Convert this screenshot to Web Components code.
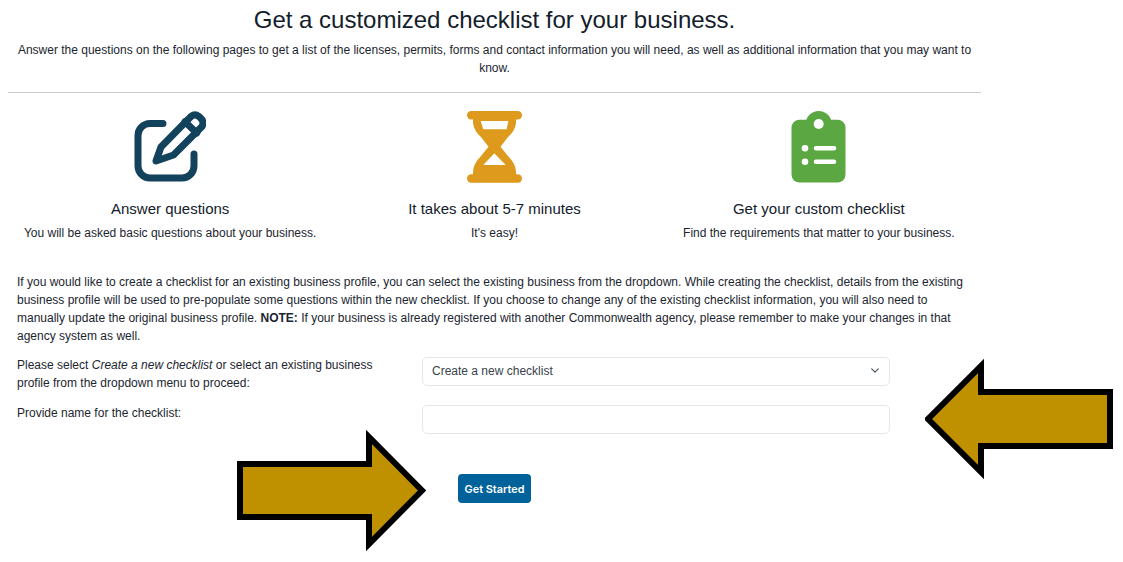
<!DOCTYPE html>
<html lang="en">
<head>
<meta charset="utf-8">
<title>Get a customized checklist</title>
<style>
    html, body { margin: 0; background: #fff; color: #1b2530; font-family: "Liberation Sans", Arial, sans-serif; }
</style>
</head>
<body>
<checklist-page>
    <checklist-intro slot="intro">
        <span slot="title">Get a customized checklist for your business.</span>
        Answer the questions on the following pages to get a list of the licenses, permits, forms and contact information you will need, as well as additional information that you may want to know.
    </checklist-intro>
    <step-card slot="steps" heading="Answer questions" text="You will be asked basic questions about your business.">
        <svg width="72" height="73" viewBox="134 110 72 73" fill="none" stroke="#12425c" stroke-width="7" stroke-linecap="round" stroke-linejoin="round">
            <path d="M163 123.500H150a12 12 0 0 0-12 12V166a12 12 0 0 0 12 12H182a12 12 0 0 0 12-12V154"/>
            <path d="M156 161L161 147L187 120.500L191.500 116Q195 113.500 199 116.500L201 118.500Q204.500 122 202 126.500L173.500 155Z"/>
            <path d="M185 121.700L196.700 133"/>
        </svg>
    </step-card>
    <step-card slot="steps" heading="It takes about 5-7 minutes" text="It's easy!">
        <svg width="55" height="73" viewBox="467 110 55 73">
            <rect x="467" y="111" width="55" height="8.500" rx="4.200" fill="#de9a1c"/>
            <rect x="467" y="174.300" width="55" height="8.500" rx="4.200" fill="#de9a1c"/>
            <path fill="#de9a1c" fill-rule="evenodd" d="M473 118V123Q474 131 481 137L488.500 146.700L481 156Q473 164 473 172V176H516V172Q516 164 508 156L500.500 146.700L508 137Q515 131 516 123V118ZM480.700 121L508.300 121L506.700 129.300L483.300 129.300ZM494.300 153.300L483.300 165L505.700 165Z"/>
        </svg>
    </step-card>
    <step-card slot="steps" heading="Get your custom checklist" text="Find the requirements that matter to your business.">
        <svg width="55" height="73" viewBox="791 111 55 73">
            <circle cx="818.700" cy="125" r="13" fill="#5ba843"/>
            <rect x="791.500" y="120.700" width="54" height="62.800" rx="8" fill="#5ba843"/>
            <circle cx="818.700" cy="125" r="5" fill="#fff"/>
            <circle cx="805" cy="149.300" r="3.300" fill="#fff"/>
            <circle cx="805" cy="162.700" r="3.300" fill="#fff"/>
            <path d="M816 149.300H834M816 162.700H834" stroke="#fff" stroke-width="4.500" stroke-linecap="round"/>
        </svg>
    </step-card>
    <p slot="note">If you would like to create a checklist for an existing business profile, you can select the existing business from the dropdown. While creating the checklist, details from the existing business profile will be used to pre-populate some questions within the new checklist. If you choose to change any of the existing checklist information, you will also need to manually update the original business profile. <b>NOTE:</b> If your business is already registered with another Commonwealth agency, please remember to make your changes in that agency system as well.</p>
    <form-row slot="form">
        <span slot="label">Please select <i>Create a new checklist</i> or select an existing business profile from the dropdown menu to proceed:</span>
        <fake-select value="Create a new checklist"></fake-select>
    </form-row>
    <form-row slot="form">
        <span slot="label">Provide name for the checklist:</span>
        <fake-select empty></fake-select>
    </form-row>
    <start-button slot="action">Get Started</start-button>
</checklist-page>
<arrow-mark box="925 358 188 122" points="1110,392 981,392 981,366 928,419 981,472 981,446 1110,446"></arrow-mark>
<arrow-mark box="237 429 189 123" points="240,464 369,464 369,437 422,490.500 369,544 369,517 240,517"></arrow-mark>

<script>
    // Contenedor general: hace de columna y reparte cada bloque en su sitio.
    class ChecklistPage extends HTMLElement {
        constructor() {
            super();
            this.attachShadow({ mode: 'open' });
        }

        connectedCallback() {
            this.shadowRoot.innerHTML = `
                <style>
                    :host { display: block; width: 973px; margin-left: 8px; font-size: 12px; line-height: 18px; }
                    .steps { display: grid; grid-template-columns: repeat(3, 1fr); margin-top: 17px; }
                    .note { padding: 0 9px; margin-top: 31px; }
                    ::slotted(p) { margin: 0; }
                    .form { display: flex; flex-direction: column; gap: 13px; padding: 0 9px; margin-top: 12px; }
                    .action { padding-left: 450px; margin-top: 40px; }
                </style>
                <slot name="intro"></slot>
                <div class="steps"><slot name="steps"></slot></div>
                <div class="note"><slot name="note"></slot></div>
                <div class="form"><slot name="form"></slot></div>
                <div class="action"><slot name="action"></slot></div>
            `;
        }
    }

    // Título, texto de entrada y la línea de separación.
    class ChecklistIntro extends HTMLElement {
        constructor() {
            super();
            this.attachShadow({ mode: 'open' });
        }

        connectedCallback() {
            this.shadowRoot.innerHTML = `
                <style>
                    :host { display: block; text-align: center; border-bottom: 1px solid #c9cccf; padding: 5px 0 15px; }
                    h1 { margin: 0 0 7px; font-size: 24px; line-height: 29px; font-weight: 400; color: #13202b; }
                    div { padding: 0 9px; }
                </style>
                <h1><slot name="title"></slot></h1>
                <div><slot></slot></div>
            `;
        }
    }

    // Tarjeta de cada paso: icono arriba, y título y descripción debajo.
    class StepCard extends HTMLElement {
        constructor() {
            super();
            this.attachShadow({ mode: 'open' });
        }

        connectedCallback() {
            this.shadowRoot.innerHTML = `
                <style>
                    :host { display: flex; flex-direction: column; align-items: center; text-align: center; }
                    .icon { height: 73px; display: flex; }
                    h2 { margin: 16px 0 5px; font-size: 15px; line-height: 20px; font-weight: 400; color: #13202b; }
                </style>
                <div class="icon"><slot></slot></div>
                <h2>${this.getAttribute('heading')}</h2>
                <div>${this.getAttribute('text')}</div>
            `;
        }
    }

    // Fila del formulario: etiqueta a la izquierda y control a la derecha.
    class FormRow extends HTMLElement {
        constructor() {
            super();
            this.attachShadow({ mode: 'open' });
        }

        connectedCallback() {
            this.shadowRoot.innerHTML = `
                <style>
                    :host { display: grid; grid-template-columns: 405px 468px; }
                    .label { max-width: 370px; margin-top: -1px; }
                </style>
                <div class="label"><slot name="label"></slot></div>
                <div><slot></slot></div>
            `;
        }
    }

    // Caja con el aspecto del desplegable; sin valor sirve también para el campo de texto.
    class FakeSelect extends HTMLElement {
        constructor() {
            super();
            this.attachShadow({ mode: 'open' });
        }

        connectedCallback() {
            const chevron = this.hasAttribute('empty') ? '' : `
                <svg width="8" height="5" viewBox="0 0 8 5" fill="none" stroke="#4a5560" stroke-width="1.200" stroke-linecap="round" stroke-linejoin="round"><path d="M.7 .8L4 4.100L7.300 .8"/></svg>
            `;
            this.shadowRoot.innerHTML = `
                <style>
                    :host { display: flex; align-items: center; justify-content: space-between; box-sizing: border-box; height: 29px; padding: 0 10px 2px 9px; border: 1px solid #e6e8ea; border-radius: 5px; color: #38424c; }
                </style>
                <span>${this.getAttribute('value') || ''}</span>
                ${chevron}
            `;
        }
    }

    class StartButton extends HTMLElement {
        constructor() {
            super();
            this.attachShadow({ mode: 'open' });
        }

        connectedCallback() {
            this.shadowRoot.innerHTML = `
                <style>
                    :host { display: inline-flex; align-items: center; justify-content: center; width: 73px; height: 29px; border-radius: 4px; background: #00629b; color: #fff; font: 600 10.900px Inter, "Liberation Sans", sans-serif; }
                </style>
                <slot></slot>
            `;
        }
    }

    // Flecha dorada pintada encima de la captura; su lugar libre sobre la página es el contenido.
    class ArrowMark extends HTMLElement {
        constructor() {
            super();
            this.attachShadow({ mode: 'open' });
        }

        connectedCallback() {
            const [x, y, w, h] = this.getAttribute('box').split(' ');
            this.shadowRoot.innerHTML = `
                <style>
                    :host { position: absolute; left: ${x}px; top: ${y}px; width: ${w}px; height: ${h}px; }
                    svg { display: block; }
                </style>
                <svg width="${w}" height="${h}" viewBox="${x} ${y} ${w} ${h}">
                    <polygon points="${this.getAttribute('points')}" fill="#bf9000" stroke="#000" stroke-width="6" stroke-miterlimit="10"/>
                </svg>
            `;
        }
    }

    customElements.define('checklist-page', ChecklistPage);
    customElements.define('checklist-intro', ChecklistIntro);
    customElements.define('step-card', StepCard);
    customElements.define('form-row', FormRow);
    customElements.define('fake-select', FakeSelect);
    customElements.define('start-button', StartButton);
    customElements.define('arrow-mark', ArrowMark);
</script>
</body>
</html>
